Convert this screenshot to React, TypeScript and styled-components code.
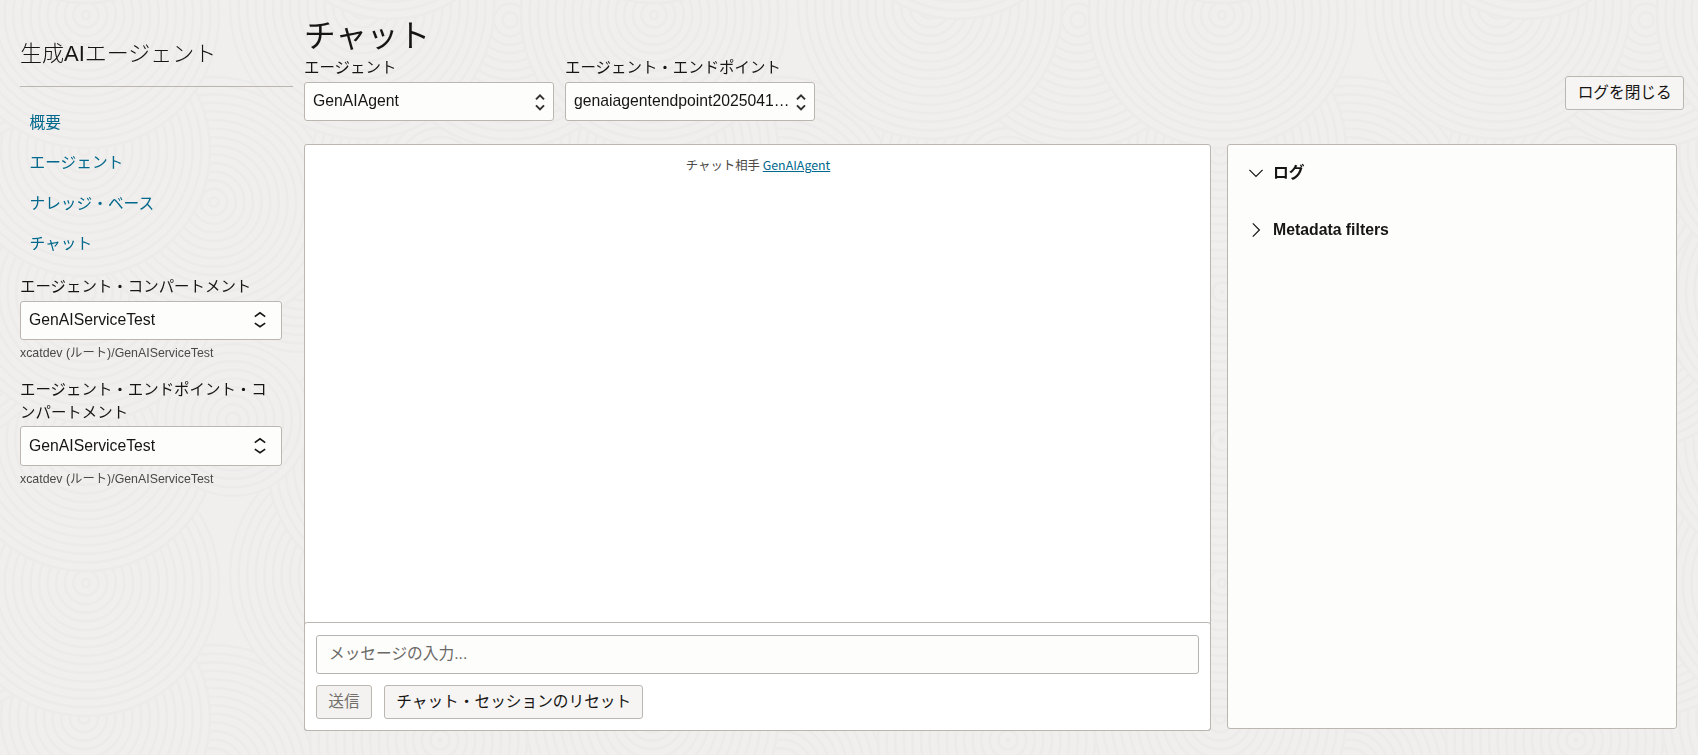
import React from 'react';
import styled, { createGlobalStyle } from 'styled-components';

const JP = "'Noto Sans CJK JP'";
const SANS = `'Liberation Sans', ${JP}, sans-serif`;

const GlobalStyle = createGlobalStyle`
  * { box-sizing: border-box; }
  body {
    margin: 0;
    background: #f0efed;
    color: #161513;
    font-family: ${SANS};
    font-size: 16px;
    overflow: hidden;
  }
`;

const TILE = 568;
const SWIRLS = [
  { x: 86, y: 583, r: 133 },
  { x: 362, y: 575, r: 132 },
  { x: 510, y: 588, r: 128 },
  { x: 214, y: 770, r: 125 },
  { x: 86, y: 440, r: 131 },
  { x: 440, y: 740, r: 130 },
  { x: 233, y: 420, r: 76 },
  { x: 390, y: 465, r: 122 },
  { x: 84, y: 718, r: 126 },
  { x: 300, y: 830, r: 90 },
  { x: 86, y: 860, r: 130 },
  { x: 490, y: 880, r: 140 },
];
const PLACED = [-2, -1, 0, 1]
  .flatMap((row) => [-1, 0, 1].flatMap((col) => SWIRLS.map((s) => ({ ...s, x: s.x + col * TILE, y: s.y + row * TILE }))))
  .filter((s) => s.x > -s.r && s.x < TILE + s.r && s.y > -s.r && s.y < TILE + s.r)
  .sort((a, b) => b.y - a.y);

const Backdrop = styled.svg`
  position: fixed;
  inset: 0;
  width: 100%;
  height: 100%;
  z-index: -1;
`;

const Page = styled.div`
  display: flex;
  height: 755px;
`;

const Sidebar = styled.aside`
  width: 304px;
  flex: none;
  padding: 33px 11px 0 20px;
`;

const ServiceTitle = styled.h2`
  margin: 0;
  height: 54px;
  line-height: 42px;
  border-bottom: 1px solid #bcb6b1;
  font-size: 22px;
  font-weight: 300;
`;

const Nav = styled.nav`
  display: flex;
  flex-direction: column;
  gap: 16.5px;
  padding: 23.5px 0 0 9.5px;
  margin-bottom: 18.5px;
`;

const NavLink = styled.a`
  height: 24px;
  line-height: 24px;
  font-size: 15.7px;
  color: #00688c;
`;

const Field = styled.div<{ $width: number; $gap?: number }>`
  width: ${(p) => p.$width}px;
  margin-bottom: ${(p) => p.$gap ?? 0}px;
`;

const Label = styled.label<{ $gap: number }>`
  display: block;
  font-size: 15.45px;
  line-height: 23px;
  margin-bottom: ${(p) => p.$gap}px;
`;

const Select = styled.div<{ $inset: number; $height?: number }>`
  display: flex;
  align-items: center;
  justify-content: space-between;
  height: ${(p) => p.$height ?? 39}px;
  padding: 0 ${(p) => p.$inset}px 0 8px;
  border: 1px solid #bcb6b1;
  border-radius: 3px;
  background: #fdfdfb;
  font-size: 15.75px;
  line-height: 36px;
  white-space: nowrap;
`;

const Value = styled.span<{ $raised?: boolean }>`
  padding-bottom: ${(p) => (p.$raised ? 2 : 0)}px;
`;

const Hint = styled.div`
  margin-top: 4px;
  font-size: 12.35px;
  line-height: 18px;
  color: #4b4845;
`;

const Main = styled.main`
  flex: 1;
  min-width: 0;
`;

const Header = styled.header`
  display: flex;
  justify-content: space-between;
  align-items: flex-end;
  height: 144px;
  padding: 0 14px 23px 0;
`;

const Title = styled.h1`
  margin: 0;
  font-size: 31.6px;
  font-weight: 400;
  line-height: 39px;
`;

const Filters = styled.div`
  display: flex;
  gap: 11px;
`;

const Button = styled.button<{ $muted?: boolean }>`
  height: 34px;
  padding: 0 11.3px;
  border: 1px solid #bcb6b1;
  border-radius: 3px;
  background: ${(p) => (p.$muted ? '#f3f2f0' : '#f7f5f4')};
  color: ${(p) => (p.$muted ? '#73706c' : '#161513')};
  font: 15.68px/32px ${SANS};
  white-space: nowrap;
`;

const CloseSlot = styled.div`
  height: 45px;
`;

const Panels = styled.div`
  display: flex;
  align-items: flex-start;
  gap: 16px;
`;

const ChatPanel = styled.section`
  display: flex;
  flex-direction: column;
  width: 907px;
  height: 587px;
  border: 1px solid #bcb6b1;
  border-radius: 3px;
  background: #fff;
`;

const Conversation = styled.div`
  flex: 1;
  padding: 9px 0 0 1px;
  text-align: center;
  font: 12.4px/22px ${JP}, sans-serif;
  color: #4b4845;
`;

const AgentLink = styled.a`
  color: #00688c;
  text-decoration: underline;
`;

const Composer = styled.div`
  height: 109px;
  margin: 0 -1px -1px;
  padding: 12px 11px 0;
  border: 1px solid #bcb6b1;
  border-radius: 3px;
`;

const MessageBox = styled.div`
  height: 39px;
  padding: 0 12px;
  border: 1px solid #b6b4b0;
  border-radius: 3px;
  background: #fdfdfb;
  font-size: 15.7px;
  line-height: 35px;
  color: #6b6966;
`;

const Actions = styled.div`
  display: flex;
  gap: 12px;
  margin-top: 11px;
`;

const LogPanel = styled.section`
  width: 450px;
  height: 585px;
  padding: 16px 20px;
  border: 1px solid #bcb6b1;
  border-radius: 3px;
  background: #fdfdfb;
`;

const Section = styled.h3`
  display: flex;
  align-items: center;
  gap: 9px;
  margin: 0 0 33px;
  height: 24px;
  line-height: 24px;
  font-size: 15.8px;
  font-weight: 700;
`;

const Sorter = ({ wide }: { wide?: boolean }) => (
  <svg
    width={wide ? 12 : 10}
    height="18"
    viewBox={wide ? '0 0 12 18' : '0 0 10 18'}
    fill="none"
    stroke={wide ? '#161513' : '#33312f'}
    strokeWidth={wide ? 1.6 : 2}
  >
    <path d={wide ? 'M.8 5.6 6 1.8l5.2 3.8M.8 12.2 6 15.7l5.2-3.5' : 'M1 6.4l4-4L9 6.4M1 12.4l4 4 4-4'} />
  </svg>
);

const Chevron = ({ open }: { open?: boolean }) => (
  <svg width="16" height="16" viewBox="0 0 16 16" fill="none" stroke="#161513" strokeWidth="1.2">
    <path d={open ? 'M1.4 4.8 8 11.4l6.6-6.6' : 'M4.8 1.4 11.4 8l-6.6 6.6'} />
  </svg>
);

const Swirls = () => (
  <Backdrop>
    <defs>
      <pattern id="swirls" width={TILE} height={TILE} patternUnits="userSpaceOnUse">
        {PLACED.map((s, i) => (
          <g key={i} fill="none" stroke="#ecebe9" strokeWidth="2.4">
            <circle cx={s.x} cy={s.y} r={s.r} fill="#f0efed" />
            {Array.from({ length: Math.floor(s.r / 8.6) }, (_, k) => (
              <circle key={k} cx={s.x} cy={s.y} r={s.r - (k + 1) * 8.6} />
            ))}
          </g>
        ))}
      </pattern>
    </defs>
    <rect width="100%" height="100%" fill="url(#swirls)" />
  </Backdrop>
);

export default function App() {
  return (
    <>
      <GlobalStyle />
      <Swirls />
      <Page lang="ja">
        <Sidebar>
          <ServiceTitle>生成AIエージェント</ServiceTitle>
          <Nav>
            {['概要', 'エージェント', 'ナレッジ・ベース', 'チャット'].map((t) => (
              <NavLink key={t}>{t}</NavLink>
            ))}
          </Nav>
          <Field $width={262} $gap={16}>
            <Label $gap={3}>エージェント・コンパートメント</Label>
            <Select $inset={15}>
              <Value>GenAIServiceTest</Value>
              <Sorter wide />
            </Select>
            <Hint>xcatdev (ルート)/GenAIServiceTest</Hint>
          </Field>
          <Field $width={262}>
            <Label $gap={2}>エージェント・エンドポイント・コンパートメント</Label>
            <Select $inset={15} $height={40}>
              <Value>GenAIServiceTest</Value>
              <Sorter wide />
            </Select>
            <Hint>xcatdev (ルート)/GenAIServiceTest</Hint>
          </Field>
        </Sidebar>
        <Main>
          <Header>
            <div>
              <Title>チャット</Title>
              <Filters>
                <Field $width={250}>
                  <Label $gap={3}>エージェント</Label>
                  <Select $inset={8}>
                    <Value $raised>GenAIAgent</Value>
                    <Sorter />
                  </Select>
                </Field>
                <Field $width={250}>
                  <Label $gap={3}>エージェント・エンドポイント</Label>
                  <Select $inset={8}>
                    <Value $raised>genaiagentendpoint2025041…</Value>
                    <Sorter />
                  </Select>
                </Field>
              </Filters>
            </div>
            <CloseSlot>
              <Button>ログを閉じる</Button>
            </CloseSlot>
          </Header>
          <Panels>
            <ChatPanel>
              <Conversation>
                チャット相手 <AgentLink>GenAIAgent</AgentLink>
              </Conversation>
              <Composer>
                <MessageBox>メッセージの入力...</MessageBox>
                <Actions>
                  <Button $muted>送信</Button>
                  <Button>チャット・セッションのリセット</Button>
                </Actions>
              </Composer>
            </ChatPanel>
            <LogPanel>
              <Section>
                <Chevron open />
                ログ
              </Section>
              <Section>
                <Chevron />
                Metadata filters
              </Section>
            </LogPanel>
          </Panels>
        </Main>
      </Page>
    </>
  );
}
